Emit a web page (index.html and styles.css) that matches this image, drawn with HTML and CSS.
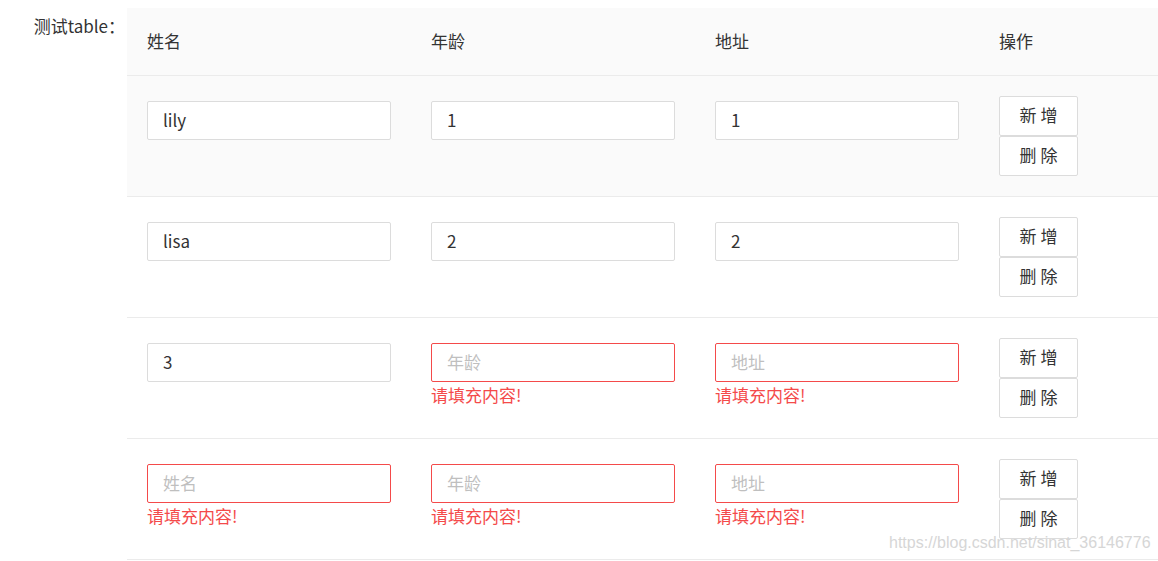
FILE: index.html
```html
<!DOCTYPE html>
<html lang="zh">
<head>
<meta charset="utf-8">
<link rel="stylesheet" href="styles.css">
</head>
<body>
<div class="page">
  <div class="label">测试table<span class="colon">：</span></div>
  <div class="table">
    <div class="row head">
      <div class="cell th">姓名</div>
      <div class="cell th">年龄</div>
      <div class="cell th">地址</div>
      <div class="cell th">操作</div>
    </div>
    <div class="row hover">
      <div class="cell field"><div class="input">lily</div></div>
      <div class="cell field"><div class="input">1</div></div>
      <div class="cell field"><div class="input">1</div></div>
      <div class="cell ops"><button class="btn">新 增</button><button class="btn">删 除</button></div>
    </div>
    <div class="row">
      <div class="cell field"><div class="input">lisa</div></div>
      <div class="cell field"><div class="input">2</div></div>
      <div class="cell field"><div class="input">2</div></div>
      <div class="cell ops"><button class="btn">新 增</button><button class="btn">删 除</button></div>
    </div>
    <div class="row">
      <div class="cell field"><div class="input">3</div></div>
      <div class="cell field"><div class="input error placeholder">年龄</div><div class="msg">请填充内容!</div></div>
      <div class="cell field"><div class="input error placeholder">地址</div><div class="msg">请填充内容!</div></div>
      <div class="cell ops"><button class="btn">新 增</button><button class="btn">删 除</button></div>
    </div>
    <div class="row">
      <div class="cell field"><div class="input error placeholder">姓名</div><div class="msg">请填充内容!</div></div>
      <div class="cell field"><div class="input error placeholder">年龄</div><div class="msg">请填充内容!</div></div>
      <div class="cell field"><div class="input error placeholder">地址</div><div class="msg">请填充内容!</div></div>
      <div class="cell ops"><button class="btn">新 增</button><button class="btn">删 除</button></div>
    </div>
  </div>
</div>
<div class="watermark">https://blog.csdn.net/sinat_36146776</div>
</body>
</html>
```
FILE: styles.css
```css
html, body {
  margin: 0;
  padding: 0;
  overflow: hidden;
  background: #fff;
}
body {
  font-family: "Noto Sans CJK SC", "Noto Sans", sans-serif;
  color: #333;
  font-size: 17px;
}
.page {
  display: flex;
  align-items: flex-start;
  padding-top: 8px;
}
.label {
  width: 125px;
  flex: none;
  text-align: right;
  padding-right: 2px;
  padding-top: 6px;
  line-height: 24px;
  font-size: 17px;
  color: #333;
  white-space: nowrap;
}
.colon {
  font-family: "Noto Sans CJK TC", "Noto Sans CJK SC", sans-serif;
}
.table {
  flex: 1;
  min-width: 0;
}
.row {
  display: grid;
  grid-template-columns: 284px 284px 284px 1fr;
  height: 120px;
  border-bottom: 1px solid #ebebeb;
  box-sizing: content-box;
}
.row.head {
  height: 67px;
  background: #fafafa;
}
.row.hover {
  background: #fafafa;
}
.cell {
  padding: 0 20px;
  box-sizing: border-box;
}
.th {
  line-height: 66px;
  font-size: 17px;
  color: #333;
}
.field {
  padding-top: 25px;
}
.input {
  height: 39px;
  box-sizing: border-box;
  border: 1px solid #dcdcdc;
  border-radius: 2px;
  background: #fff;
  padding-left: 15px;
  line-height: 35px;
  font-size: 17px;
  color: #333;
}
.input.error {
  border-color: #f44a4a;
}
.input.placeholder {
  color: #bfbfbf;
}
.msg {
  margin-top: 2px;
  line-height: 22px;
  font-size: 17px;
  color: #f44a4a;
}
.ops {
  padding-top: 20px;
  display: flex;
  flex-direction: column;
  align-items: flex-start;
}
.btn {
  width: 79px;
  height: 40px;
  box-sizing: border-box;
  margin: 0;
  border: 1px solid #dcdcdc;
  border-radius: 2px;
  background: #fff;
  font-family: "Noto Sans CJK SC", "Noto Sans", sans-serif;
  font-size: 17px;
  color: #333;
  padding: 0 0 3px;
  line-height: 35px;
}
.watermark {
  position: absolute;
  left: 889px;
  top: 532px;
  font-family: "Liberation Sans", Arial, sans-serif;
  font-size: 16px;
  line-height: 22px;
  color: #d6d6d6;
}
```
